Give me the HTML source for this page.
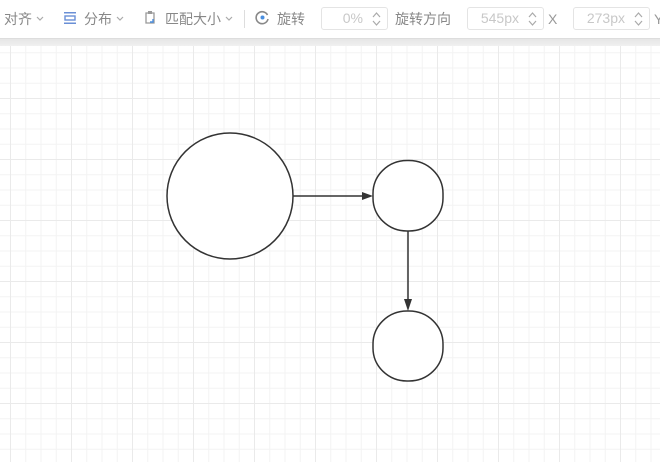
<!DOCTYPE html>
<html><head><meta charset="utf-8"><style>
html,body{margin:0;padding:0;width:660px;height:462px;overflow:hidden;background:#fff;font-family:"Liberation Sans","Noto Sans CJK SC",sans-serif;}
.tb{position:absolute;left:0;top:0;width:660px;height:38px;background:#fff;font-size:14px;color:#888;}
.band{position:absolute;left:0;top:38px;width:660px;height:8px;background:linear-gradient(#e6e6e6,#f0f0f0);border-top:1px solid #ddd;box-sizing:border-box;}
.t{position:absolute;top:9px;white-space:nowrap;line-height:20px;}
.car{display:inline-block;width:8px;height:8px;margin-left:4px;vertical-align:2px;}
.inp{position:absolute;top:7px;height:23px;border:1px solid #e4e4e4;border-radius:3px;box-sizing:border-box;color:#c8c8c8;font-size:14px;line-height:21px;text-align:right;padding-right:24px;}
.sp{position:absolute;right:5px;top:3px;}
</style></head><body>
<div class="tb">
<span class="t" style="left:4px">对齐<svg class="car" viewBox="0 0 8 8"><path d="M1 3l3 3 3-3" fill="none" stroke="#aaa" stroke-width="1.2"/></svg></span>
<svg style="position:absolute;left:63px;top:11px" width="14" height="14"><rect x="1" y="1" width="12" height="1.5" fill="#6a8fd6"/><rect x="2" y="5" width="10" height="4" fill="none" stroke="#6a8fd6" stroke-width="1.4"/><rect x="1" y="11.5" width="12" height="1.5" fill="#6a8fd6"/></svg>
<span class="t" style="left:84px">分布<svg class="car" viewBox="0 0 8 8"><path d="M1 3l3 3 3-3" fill="none" stroke="#aaa" stroke-width="1.2"/></svg></span>
<svg style="position:absolute;left:143px;top:10px" width="14" height="15"><path d="M3 3h8v10H3z" fill="none" stroke="#999" stroke-width="1.3"/><rect x="5" y="1" width="4" height="3" fill="#999"/><path d="M7 12h3V9" fill="none" stroke="#4a8fe0" stroke-width="1.4"/></svg>
<span class="t" style="left:165px">匹配大小<svg class="car" viewBox="0 0 8 8"><path d="M1 3l3 3 3-3" fill="none" stroke="#aaa" stroke-width="1.2"/></svg></span>
<div style="position:absolute;left:244px;top:10px;width:1px;height:18px;background:#ddd"></div>
<svg style="position:absolute;left:255px;top:10px" width="15" height="15"><path d="M12.5 5A6 6 0 1 0 13 9" fill="none" stroke="#888" stroke-width="1.6"/><circle cx="7.5" cy="7.5" r="2" fill="#4a8fe0"/></svg>
<span class="t" style="left:277px">旋转</span>
<div class="inp" style="left:321px;width:67px">0%<svg class="sp" width="11" height="16"><path d="M2 6l3.5-4 3.5 4M2 10l3.5 4 3.5-4" fill="none" stroke="#aaa" stroke-width="1.2"/></svg></div>
<span class="t" style="left:395px">旋转方向</span>
<div class="inp" style="left:467px;width:77px">545px<svg class="sp" width="11" height="16"><path d="M2 6l3.5-4 3.5 4M2 10l3.5 4 3.5-4" fill="none" stroke="#aaa" stroke-width="1.2"/></svg></div>
<span class="t" style="left:548px;color:#999">X</span>
<div class="inp" style="left:573px;width:77px">273px<svg class="sp" width="11" height="16"><path d="M2 6l3.5-4 3.5 4M2 10l3.5 4 3.5-4" fill="none" stroke="#aaa" stroke-width="1.2"/></svg></div>
<span class="t" style="left:654px;color:#999">Y</span>
</div>
<div class="band"></div>
<svg style="position:absolute;left:0;top:46px" width="660" height="416">
<defs>
<pattern id="mi" x="10" y="-9" width="15.25" height="15.25" patternUnits="userSpaceOnUse"><path d="M0 0V15.25M0 0H15.25" stroke="#f3f3f3" stroke-width="2" fill="none"/></pattern>
<pattern id="ma" x="10" y="-9" width="61" height="61" patternUnits="userSpaceOnUse"><path d="M0 0V61M0 0H61" stroke="#eaeaea" stroke-width="2" fill="none"/></pattern>
</defs>
<rect width="660" height="416" fill="url(#mi)"/>
<rect width="660" height="416" fill="url(#ma)"/>
<g transform="translate(0,-46)" stroke="#333" stroke-width="1.5" fill="#fff">
<circle cx="230" cy="196" r="63"/>
<rect x="373" y="160.5" width="70" height="70.5" rx="34" ry="33"/>
<rect x="373" y="311" width="70" height="70" rx="34" ry="33"/>
<path d="M293 196H363" fill="none"/>
<path d="M373 196l-11-4v8z" fill="#333" stroke="none"/>
<path d="M408 231V300" fill="none"/>
<path d="M408 311l-4-12h8z" fill="#333" stroke="none"/>
</g>
</svg>
</body></html>
